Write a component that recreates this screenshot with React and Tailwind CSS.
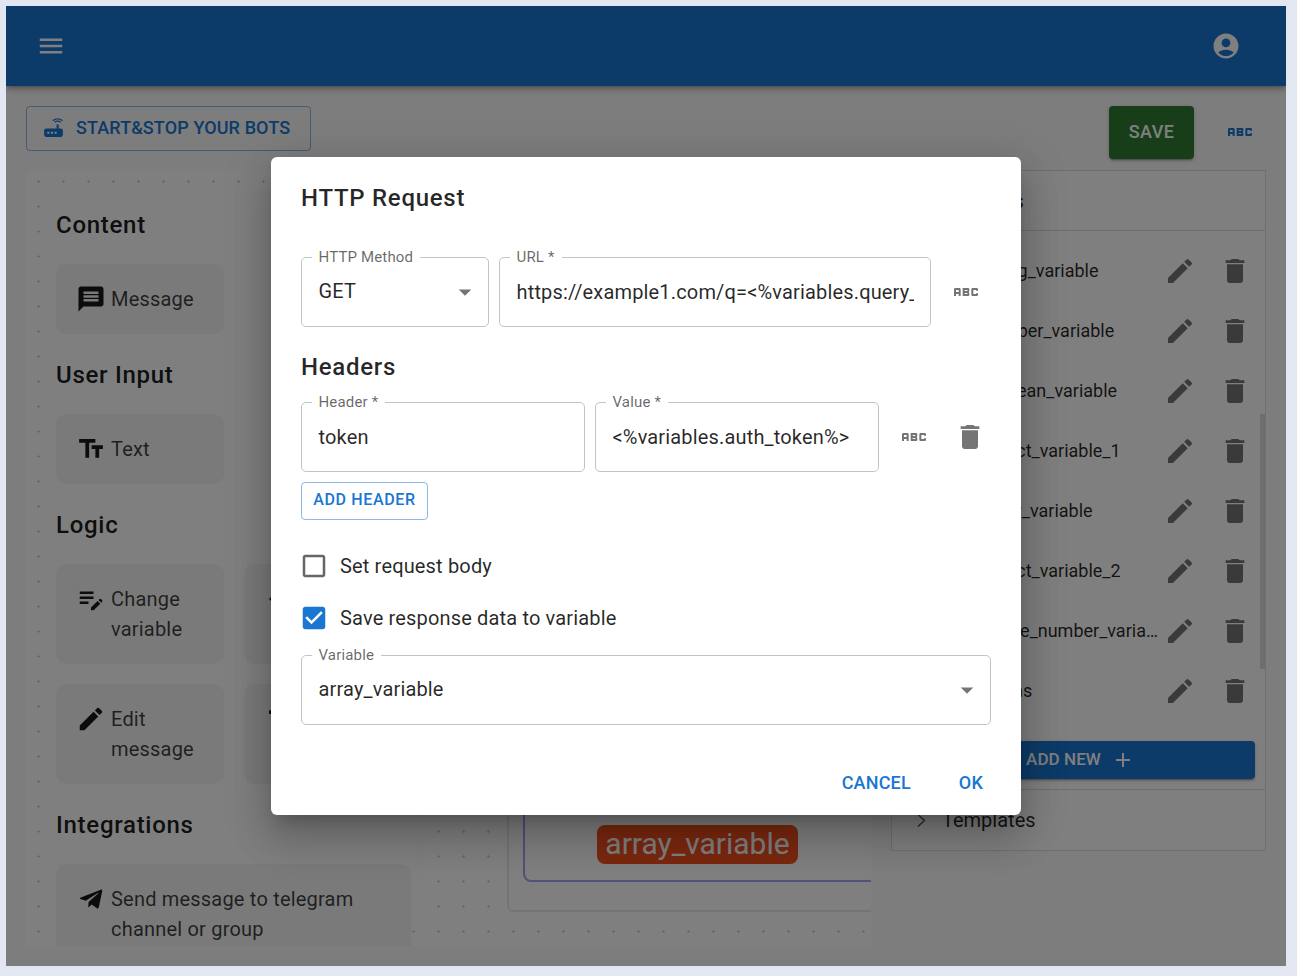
import React from "react";
import { MdEditNote } from "react-icons/md";

const P = {
  menu: "M3 18h18v-2H3v2zm0-5h18v-2H3v2zm0-7v2h18V6H3z",
  account: "M12 2C6.48 2 2 6.48 2 12s4.48 10 10 10 10-4.48 10-10S17.52 2 12 2zm0 4c1.93 0 3.5 1.57 3.5 3.5S13.93 13 12 13s-3.5-1.57-3.5-3.5S10.07 6 12 6zm0 14c-2.03 0-4.43-.82-6.14-2.88C7.55 15.8 9.68 15 12 15s4.45.8 6.14 2.12C16.43 19.18 14.03 20 12 20z",
  router: "M20.2 5.9l.8-.8C19.6 3.7 17.8 3 16 3s-3.6.7-5 2.1l.8.8C13 4.8 14.5 4.2 16 4.2s3 .6 4.2 1.7zm-.9.8c-.9-.9-2.1-1.4-3.3-1.4s-2.4.5-3.3 1.4l.8.8c.7-.7 1.6-1 2.5-1 .9 0 1.8.3 2.5 1l.8-.8zM19 13h-2V9h-2v4H5c-1.1 0-2 .9-2 2v4c0 1.1.9 2 2 2h14c1.1 0 2-.9 2-2v-4c0-1.1-.9-2-2-2zM8 18H6v-2h2v2zm3.5 0h-2v-2h2v2zm3.5 0h-2v-2h2v2z",
  abc: "M21 11h-1.5v-.5h-2v3h2V13H21v1c0 .55-.45 1-1 1h-3c-.55 0-1-.45-1-1v-4c0-.55.45-1 1-1h3c.55 0 1 .45 1 1v1zM8 10v5H6.5v-1.5h-2V15H3v-5c0-.55.45-1 1-1h3c.55 0 1 .45 1 1zm-1.5.5h-2V12h2v-1.5zm7 1.5c.55 0 1 .45 1 1v1c0 .55-.45 1-1 1h-4V9h4c.55 0 1 .45 1 1v1c0 .55-.45 1-1 1zM11 10.5v.75h2v-.75h-2zm2 2.25h-2v.75h2v-.75z",
  edit: "M3 17.25V21h3.75L17.81 9.94l-3.75-3.75L3 17.25zM20.71 7.04c.39-.39.39-1.02 0-1.41l-2.34-2.34a.9959.9959 0 0 0-1.41 0l-1.83 1.83 3.75 3.75 1.83-1.83z",
  del: "M6 19c0 1.1.9 2 2 2h8c1.1 0 2-.9 2-2V7H6v12zM19 4h-3.5l-1-1h-5l-1 1H5v2h14V4z",
  message: "M20 2H4c-1.1 0-1.99.9-1.99 2L2 22l4-4h14c1.1 0 2-.9 2-2V4c0-1.1-.9-2-2-2zm-2 12H6v-2h12v2zm0-3H6V9h12v2zm0-3H6V6h12v2z",
  text: "M2.5 4v3h5v12h3V7h5V4h-13zm19 5h-9v3h3v7h3v-7h3V9z",
  telegram: "M9.78 18.65l.28-4.23 7.68-6.92c.34-.31-.07-.46-.52-.19L7.74 13.3 3.64 12c-.88-.25-.89-.86.2-1.3l15.97-6.16c.73-.33 1.43.18 1.15 1.3l-2.72 12.81c-.19.91-.74 1.13-1.5.71L12.6 16.3l-1.99 1.93c-.23.23-.42.42-.83.42z",
  caret: "M7 10l5 5 5-5z",
  blank: "M19 5v14H5V5h14m0-2H5c-1.1 0-2 .9-2 2v14c0 1.1.9 2 2 2h14c1.1 0 2-.9 2-2V5c0-1.1-.9-2-2-2z",
  checked: "M19 3H5c-1.11 0-2 .9-2 2v14c0 1.1.89 2 2 2h14c1.11 0 2-.89 2-2V5c0-1.1-.89-2-2-2zm-9 14l-5-5 1.41-1.41L10 14.17l7.59-7.59L19 8l-9 9z",
  plus: "M19 13h-6v6h-2v-6H5v-2h6V5h2v6h6v2z",
  back: "M20 11H7.83l5.59-5.59L12 4l-8 8 8 8 1.41-1.41L7.83 13H20v-2z",
  bar: "M4 5h16v3H4z",
};

function Icon({ d, className }) {
  return (
    <svg viewBox="0 0 24 24" fill="currentColor" className={"block shrink-0 " + className}>
      <path d={d} />
    </svg>
  );
}

function Heading({ children }) {
  return <h2 className="h-10 mb-5 pt-[1px] text-[24px] leading-10 font-medium tracking-[0.03em] text-black/90">{children}</h2>;
}

function Tool({ icon, children, className = "w-[168px]" }) {
  return (
    <div className={"flex gap-[5px] p-5 rounded-[10px] bg-[#f5f5f5] text-[20px] leading-[30px] tracking-[0.01em] text-black/75 " + className}>
      <div className="w-[30px] h-[30px] shrink-0 text-black/90">{icon}</div>
      {children && <div>{children}</div>}
    </div>
  );
}

function Field({ label, className = "", children }) {
  return (
    <div className={"relative h-[70px] rounded-[5px] border border-[#c4c4c4] flex items-center pl-[16.5px] pr-4 text-[20px] tracking-[0.008em] text-black/85 " + className}>
      <span className="absolute left-[9.5px] -top-[10px] bg-white px-[7px] text-[15px] leading-[18px] text-black/60 whitespace-nowrap">
        {label}
      </span>
      {children}
    </div>
  );
}

function Caret() {
  return <Icon d={P.caret} className="w-[30px] h-[30px] ml-auto -mr-[8px] text-[#757575]" />;
}

function CheckRow({ d, label, className }) {
  return (
    <label className="h-[52px] flex items-center -ml-[2px] gap-[11px] text-[20px] tracking-[0.008em] text-black/85">
      <Icon d={d} className={"w-[30px] h-[30px] " + className} />
      {label}
    </label>
  );
}

const VARS = [
  "string_variable",
  "number_variable",
  "boolean_variable",
  "object_variable_1",
  "array_variable",
  "object_variable_2",
  "whole_number_variable",
  "metas",
];

export default function App() {
  return (
    <div className="min-h-[976px] bg-[#e3e7f2] p-[6px] pb-[10px] font-['Roboto',sans-serif]">
      <div className="relative h-[960px] w-[1280px] bg-[#fafafa] overflow-hidden">
        <header className="relative z-10 h-20 bg-[#1976d2] pl-[30px] pr-[45px] flex items-center justify-between text-white shadow-[0_2px_4px_-1px_rgba(0,0,0,0.2),0_4px_5px_0_rgba(0,0,0,0.14),0_1px_10px_0_rgba(0,0,0,0.12)]">
          <Icon d={P.menu} className="w-[30px] h-[30px]" />
          <Icon d={P.account} className="w-[30px] h-[30px]" />
        </header>

        <div className="flex items-start justify-between pt-5 px-5 h-[84px]">
          <button className="h-[45px] w-[285px] rounded border border-[#1976d2]/50 flex items-center gap-[10px] pl-[14px] pb-[2px] text-[18px] font-medium tracking-[0.006em] text-[#1976d2]">
            <Icon d={P.router} className="w-[25px] h-[25px]" />
            START&amp;STOP YOUR BOTS
          </button>
          <div className="flex items-start">
            <button className="w-[85px] h-[53px] pb-[2px] rounded bg-[#2e7d32] text-white text-[18px] font-medium tracking-[0.02em] shadow-[0_3px_1px_-2px_rgba(0,0,0,0.2),0_2px_2px_0_rgba(0,0,0,0.14),0_1px_5px_0_rgba(0,0,0,0.12)]">
              SAVE
            </button>
            <div className="ml-5 w-[52px] h-[52px] flex items-center justify-center text-[#1976d2]">
              <Icon d={P.abc} className="w-8 h-8" />
            </div>
          </div>
        </div>

        <main className="flex gap-5 px-5">
          <section className="relative w-[845px] h-[776px] shrink-0 overflow-hidden bg-white pl-5 pt-[25px]">
            <svg className="absolute inset-0 w-full h-full" aria-hidden="true">
              <defs>
                <pattern id="dots" width="25" height="25" patternUnits="userSpaceOnUse">
                  <path d="M12 10h1v1h1v1h-1v1h-1v-1h-1v-1h1z" fill="#d2d2d2" />
                </pattern>
              </defs>
              <rect width="100%" height="100%" fill="url(#dots)" />
            </svg>

            <div className="relative w-[375px] h-[726px] bg-white pt-[9px] px-[10px] shadow-[0_0_3px_rgba(0,0,0,0.05)]">
              <Heading>Content</Heading>
              <Tool icon={<Icon d={P.message} className="w-full h-full" />}>Message</Tool>
              <div className="mt-5">
                <Heading>User Input</Heading>
                <Tool icon={<Icon d={P.text} className="w-full h-full" />}>Text</Tool>
              </div>
              <div className="mt-5">
                <Heading>Logic</Heading>
                <div className="grid grid-cols-[168px_168px] gap-x-5 gap-y-5">
                  <Tool icon={<MdEditNote className="w-full h-full" />}>Change variable</Tool>
                  <Tool icon={<Icon d={P.back} className="w-full h-full" />} />
                  <Tool icon={<Icon d={P.edit} className="w-full h-full" />}>Edit message</Tool>
                  <Tool icon={<Icon d={P.bar} className="w-full h-full" />} />
                </div>
              </div>
              <div className="mt-5">
                <Heading>Integrations</Heading>
                <Tool className="w-[355px]" icon={<Icon d={P.telegram} className="w-full h-full" />}>
                  Send message to telegram channel or group
                </Tool>
              </div>
            </div>

            <div className="absolute left-[481px] top-[400px] w-[600px] h-[342px] rounded-[6px] bg-white border-2 border-[#e8e8e8]">
              <div className="absolute left-[14px] top-[10px] w-[570px] h-[300px] rounded-[8px] border-2 border-[#a0a5f5] flex items-end">
                <span className="ml-[72px] mb-[16px] h-[39px] w-[201px] rounded-[8px] bg-[#f4511e] text-white text-[30px] leading-[37px] text-center whitespace-nowrap">
                  array_variable
                </span>
              </div>
            </div>
          </section>

          <aside className="w-[375px] h-[681px] shrink-0 border border-[#dedede] bg-white text-[20px] text-black/85 flex flex-col">
            <div className="h-[60px] shrink-0 border-b border-[#dedede] flex items-center pl-[49px]">Variables</div>
            <div className="relative flex-1 pt-[10px]">
              {VARS.map((v) => (
                <div key={v} className="h-[60px] flex items-center pl-[90px] pr-[5px] text-[18px] text-black/85">
                  <span className="min-w-0 flex-1 truncate pb-[2px]">{v}</span>
                  <span className="w-[40px] flex justify-center text-[#757575]">
                    <Icon d={P.edit} className="w-8 h-8" />
                  </span>
                  <span className="ml-[10px] w-[50px] flex justify-center text-[#757575]">
                    <Icon d={P.del} className="w-8 h-8" />
                  </span>
                </div>
              ))}
              <div className="absolute right-0 top-[183px] w-[5px] h-[255px] bg-[#dcdcdc]" />
              <button className="mt-5 mx-[10px] w-[353px] h-[38px] pl-1 rounded bg-[#1976d2] text-white text-[17px] font-medium tracking-[0.004em] flex items-center justify-center gap-[10px] shadow-[0_3px_1px_-2px_rgba(0,0,0,0.2),0_2px_2px_0_rgba(0,0,0,0.14),0_1px_5px_0_rgba(0,0,0,0.12)]">
                ADD NEW
                <Icon d={P.plus} className="w-6 h-6" />
              </button>
            </div>
            <div className="h-[61px] shrink-0 border-t border-[#dedede] flex items-center pl-[25px] gap-[16px]">
              <svg viewBox="0 0 9 13" fill="none" stroke="currentColor" strokeWidth="1.2" className="block w-[9px] h-[13px] text-[#4a4a4a]">
                <path d="M1 .5 7.5 6.5 1 12.5" />
              </svg>
              Templates
            </div>
          </aside>
        </main>

        <div className="absolute inset-0 z-20 bg-black/50 flex items-center justify-center">
          <div className="w-[750px] h-[658px] rounded-[6px] bg-white px-[30px] pt-[25px] shadow-[0_11px_15px_-7px_rgba(0,0,0,0.2),0_24px_38px_3px_rgba(0,0,0,0.14),0_9px_46px_8px_rgba(0,0,0,0.12)]">
            <h1 className="h-8 text-[24px] leading-8 font-medium tracking-[0.03em] text-black/85">HTTP Request</h1>

            <div className="mt-[43px] flex gap-[10px]">
              <Field label="HTTP Method" className="w-[188px]">
                <span className="pb-[2px]">GET</span>
                <Caret />
              </Field>
              <Field label="URL *" className="w-[432px]">
                <span className="block overflow-hidden whitespace-nowrap">https://example1.com/q=&lt;%variables.query_string%&gt;</span>
              </Field>
              <div className="w-[50px] flex items-center justify-center text-[#757575]">
                <Icon d={P.abc} className="w-8 h-8" />
              </div>
            </div>

            <h2 className="mt-5 h-10 text-[24px] leading-10 font-medium tracking-[0.03em] text-black/85">Headers</h2>

            <div className="mt-[15px] flex gap-[10px]">
              <Field label="Header *" className="w-[284px]">token</Field>
              <Field label="Value *" className="w-[284px]">
                <span className="whitespace-nowrap">&lt;%variables.auth_token%&gt;</span>
              </Field>
              <div className="w-[50px] flex items-center justify-center text-[#757575]">
                <Icon d={P.abc} className="w-8 h-8" />
              </div>
              <div className="w-[42px] flex items-center justify-center text-[#757575]">
                <Icon d={P.del} className="w-8 h-8" />
              </div>
            </div>

            <button className="mt-[10px] block w-[127px] h-[38px] pb-[2px] rounded border border-[#1976d2]/50 text-[#1976d2] text-[16px] font-medium tracking-[0.04em]">
              ADD HEADER
            </button>

            <div className="mt-5">
              <CheckRow d={P.blank} label="Set request body" className="text-[#666666]" />
              <CheckRow d={P.checked} label="Save response data to variable" className="text-[#1976d2]" />
            </div>

            <div className="mt-[11px]">
              <Field label="Variable" className="w-[690px]">
                <span className="pb-[2px]">array_variable</span>
                <Caret />
              </Field>
            </div>

            <div className="mt-[35px] h-11 flex items-center justify-end gap-12 pr-2 text-[18px] font-medium tracking-[0.01em] text-[#1976d2]">
              <button>CANCEL</button>
              <button>OK</button>
            </div>
          </div>
        </div>
      </div>
    </div>
  );
}
